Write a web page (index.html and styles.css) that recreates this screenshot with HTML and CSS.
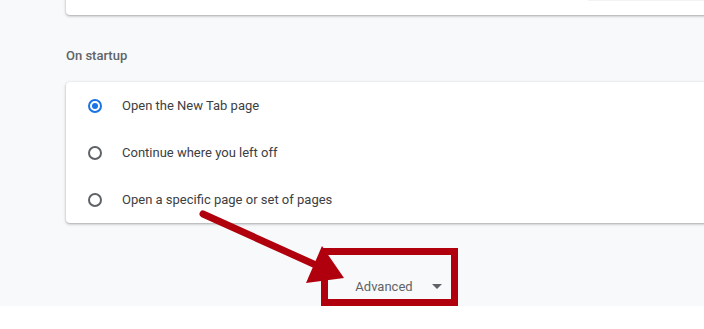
FILE: index.html
```html
<!DOCTYPE html>
<html>
<head>
<meta charset="utf-8">
<link rel="stylesheet" href="styles.css">
</head>
<body>
<div class="page">
  <div class="column">
    <div class="card top-card">
      <div class="top-row">
        <span class="top-label">Search engine used in the address bar</span>
        <span class="top-select"></span>
      </div>
    </div>
    <h2 class="section-title">On startup</h2>
    <div class="card">
      <div class="row">
        <span class="radio checked"></span>
        <span class="label">Open the New Tab page</span>
      </div>
      <div class="row">
        <span class="radio"></span>
        <span class="label">Continue where you left off</span>
      </div>
      <div class="row">
        <span class="radio"></span>
        <span class="label">Open a specific page or set of pages</span>
      </div>
    </div>
    <div class="advanced-wrap">
      <button class="advanced">
        <span>Advanced</span>
        <svg class="caret" width="10" height="5" viewBox="0 0 10 5"><path d="M0 0 L10 0 L5 5 Z" fill="#5f6368"/></svg>
      </button>
    </div>
  </div>
  <div class="footer"></div>
  <div class="highlight"></div>
  <svg class="arrow" width="704" height="329" viewBox="0 0 704 329">
    <line x1="203" y1="214" x2="318" y2="266" stroke="#b0000d" stroke-width="7" stroke-linecap="round"/>
    <polygon points="322,246 344,278 306,283" fill="#b0000d"/>
  </svg>
</div>
</body>
</html>
```
FILE: styles.css
```css
html, body {
  margin: 0;
  padding: 0;
}
body {
  background: #f8f9fa;
  font-family: Roboto, "Liberation Sans", sans-serif;
  width: 704px;
  height: 329px;
  overflow: hidden;
}
.page {
  position: relative;
  width: 704px;
  height: 329px;
  overflow: hidden;
}
.column {
  width: 660px;
  margin-left: 66px;
}
.card {
  background: #ffffff;
  border-radius: 4px;
  box-shadow: 0 1px 2px rgba(60, 64, 67, 0.3), 0 1px 3px 1px rgba(60, 64, 67, 0.12);
}
.top-card {
  margin-top: -33px;
  height: 48px;
}
.top-row {
  display: flex;
  align-items: flex-start;
  justify-content: space-between;
  height: 48px;
  padding: 0 20px;
  box-sizing: border-box;
}
.top-label {
  font-size: 13px;
  color: #3c4043;
  margin-top: 18px;
}
.top-select {
  width: 120px;
  height: 34px;
  background: #f1f3f4;
  border-radius: 4px;
}
.section-title {
  margin: 31px 0 16px 0;
  font-size: 13px;
  font-weight: 500;
  line-height: 20px;
  color: #5f6368;
}
.row {
  display: flex;
  align-items: center;
  height: 47px;
  padding-left: 22px;
  gap: 20px;
}
.radio {
  width: 10px;
  height: 10px;
  border: 2px solid #5f6368;
  border-radius: 50%;
  position: relative;
}
.radio.checked {
  border-color: #1a73e8;
}
.radio.checked::after {
  content: "";
  position: absolute;
  left: 2px;
  top: 2px;
  width: 6px;
  height: 6px;
  border-radius: 50%;
  background: #1a73e8;
}
.label {
  font-size: 13px;
  color: #3c4043;
}
.advanced-wrap {
  display: flex;
  justify-content: center;
  margin-top: 45px;
}
.advanced {
  display: flex;
  align-items: center;
  gap: 19px;
  height: 36px;
  padding: 0 4px;
  margin-left: 5px;
  border: none;
  background: transparent;
  font-family: Roboto, "Liberation Sans", sans-serif;
  font-size: 13px;
  color: #5f6368;
}
.caret {
  display: block;
}
.footer {
  position: absolute;
  left: 0;
  top: 306px;
  width: 704px;
  height: 23px;
  background: #ffffff;
}
.highlight {
  position: absolute;
  left: 321px;
  top: 248px;
  width: 137px;
  height: 58px;
  border: 7px solid #b0000d;
  box-sizing: border-box;
}
.arrow {
  position: absolute;
  left: 0;
  top: 0;
}
```
